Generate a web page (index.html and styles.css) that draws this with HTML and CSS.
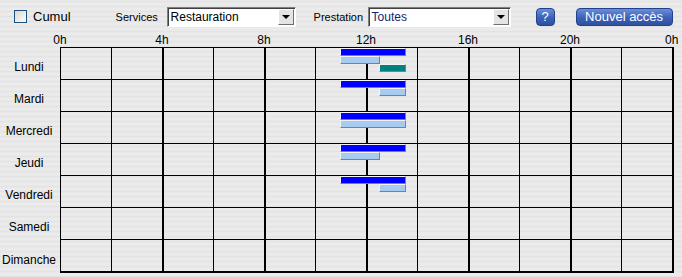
FILE: index.html
```html
<!DOCTYPE html>
<html lang="fr">
<head>
    <meta charset="UTF-8">
    <title>Planning des accès</title>
    <link rel="stylesheet" href="styles.css">
</head>
<body>
    <!-- Barre de filtres -->
    <div class="toolbar">
        <label class="cumul"><span class="checkbox"></span>Cumul</label>
        <span class="field-label services-label">Services</span>
        <div class="combo combo-services">
            <span class="combo-text">Restauration</span>
            <span class="combo-btn"><span class="arrow"></span></span>
        </div>
        <span class="field-label prestation-label">Prestation</span>
        <div class="combo combo-prestation">
            <span class="combo-text selected">Toutes</span>
            <span class="combo-btn"><span class="arrow"></span></span>
        </div>
        <button class="btn btn-help">?</button>
        <button class="btn btn-new">Nouvel accès</button>
    </div>

    <!-- Echelle des heures -->
    <div class="hours">
        <span>0h</span><span>4h</span><span>8h</span><span>12h</span><span>16h</span><span>20h</span><span>0h</span>
    </div>

    <div id="planning" class="planning"></div>

    <script>
        const HOUR = 25.5; // 51px par tranche de 2h

        const days = [
            { name: 'Lundi', bars: [['blue', 11, 13.5], ['light', 11, 12.5], ['teal', 12.5, 13.5]] },
            { name: 'Mardi', bars: [['blue', 11, 13.5], ['light', 12.5, 13.5]] },
            { name: 'Mercredi', bars: [['blue', 11, 13.5], ['light', 11, 13.5]] },
            { name: 'Jeudi', bars: [['blue', 11, 13.5], ['light', 11, 12.5]] },
            { name: 'Vendredi', bars: [['blue', 11, 13.5], ['light', 12.5, 13.5]] },
            { name: 'Samedi', bars: [] },
            { name: 'Dimanche', bars: [] }
        ];

        const planning = document.getElementById('planning');

        days.forEach(day => {
            const row = document.createElement('div');
            row.className = 'day';

            const label = document.createElement('div');
            label.className = 'day-label';
            label.textContent = day.name;
            row.appendChild(label);

            const track = document.createElement('div');
            track.className = 'track';
            for (let i = 0; i < 12; i++) {
                const cell = document.createElement('div');
                cell.className = 'cell';
                track.appendChild(cell);
            }

            day.bars.forEach((bar, index) => {
                const [type, start, end] = bar;
                const left = Math.ceil(start * HOUR - 0.5);
                const right = Math.ceil(end * HOUR) + 1;
                const el = document.createElement('div');
                el.className = 'bar bar-' + type;
                el.style.left = left + 'px';
                el.style.width = (right - left) + 'px';
                el.style.top = (index * 8) + 'px';
                track.appendChild(el);
            });

            row.appendChild(track);
            planning.appendChild(row);
        });
    </script>
</body>
</html>
```

FILE: styles.css
```css
/* Page */
body {
    margin: 0;
    width: 682px;
    height: 277px;
    overflow: hidden;
    background-color: #e7e7e7;
    background-image: repeating-linear-gradient(180deg, #e9e9e9 0 1px, #e3e3e3 1px 2px, #e8e8e8 2px 3px, #ebebeb 3px 5px);
    font-family: "Liberation Sans", Arial, sans-serif;
    font-size: 12px;
    color: #000;
}

/* Barre de filtres */
.toolbar {
    display: flex;
    align-items: center;
    height: 33px;
}

.cumul {
    display: flex;
    align-items: center;
    margin-left: 14px;
    font-size: 13px;
}

.checkbox {
    width: 11px;
    height: 11px;
    margin-right: 6px;
    border: 1px solid #1c5180;
    background: linear-gradient(135deg, #d8d8d2, #fdfdfd);
}

.field-label {
    font-size: 11px;
    white-space: nowrap;
}

.services-label {
    width: 46px;
    margin: 0 5px 0 45px;
}

.prestation-label {
    width: 48px;
    margin: 0 6px 0 18px;
}

/* Listes deroulantes */
.combo {
    display: flex;
    align-items: center;
    height: 20px;
    box-sizing: border-box;
    background: #fff;
    border: 1px solid;
    border-color: #808080 #fff #fff #808080;
    box-shadow: inset 1px 1px 0 #404040;
}

.combo-services {
    width: 129px;
}

.combo-prestation {
    width: 143px;
}

.combo-text {
    flex: 1;
    padding-left: 3px;
    white-space: nowrap;
}

.combo-text.selected {
    color: #14286a;
}

.combo-btn {
    display: flex;
    align-items: center;
    justify-content: center;
    width: 16px;
    height: 16px;
    margin-right: 1px;
    box-sizing: border-box;
    background: #e4e4e4;
    border: 1px solid;
    border-color: #fff #707070 #707070 #fff;
}

.arrow {
    width: 0;
    height: 0;
    border-left: 4px solid transparent;
    border-right: 4px solid transparent;
    border-top: 4px solid #000;
}

/* Boutons */
.btn {
    height: 18px;
    padding: 0 5px;
    border: 1px solid #22408c;
    border-radius: 4px;
    background: linear-gradient(#6a8edb, #3c61b8 55%, #2f519e);
    color: #fff;
    font-family: "Liberation Sans", Arial, sans-serif;
    font-size: 13px;
    line-height: 16px;
    cursor: pointer;
}

.btn-help {
    width: 19px;
    padding: 0;
    margin-left: 25px;
}

.btn-new {
    width: 97px;
    margin-left: 21px;
}

/* Echelle horaire */
.hours {
    display: flex;
    height: 14px;
    margin-left: 9px;
    line-height: 14px;
}

.hours span {
    flex: 0 0 102px;
    text-align: center;
}

.hours span:last-child {
    flex-basis: auto;
    margin-left: 44px;
}

/* Grille du planning */
.day {
    display: flex;
}

.day-label {
    display: flex;
    align-items: center;
    justify-content: center;
    width: 60px;
    padding: 6px 2px 0 0;
    box-sizing: border-box;
}

.track {
    position: relative;
    display: grid;
    grid-template-columns: repeat(12, 51px);
    border-right: 2px solid #000;
}

.day:first-child .track {
    border-top: 1px solid #000;
}

.cell {
    height: 32px;
    box-sizing: border-box;
    border-left: 1px solid #000;
    border-bottom: 1px solid #000;
}

.cell:nth-child(odd):not(:first-child) {
    border-left-width: 2px;
}

.day:last-child .cell {
    border-bottom-width: 2px;
    height: 33px;
}

/* Plages d'acces */
.bar {
    position: absolute;
    height: 8px;
    box-sizing: border-box;
    border: 1px solid;
    border-color: #f4f4f4 #808080 #808080 #f4f4f4;
}

.bar-blue {
    background: #0000ff;
}

.bar-light {
    background: #a6caf0;
}

.bar-teal {
    background: #008080;
}
```
